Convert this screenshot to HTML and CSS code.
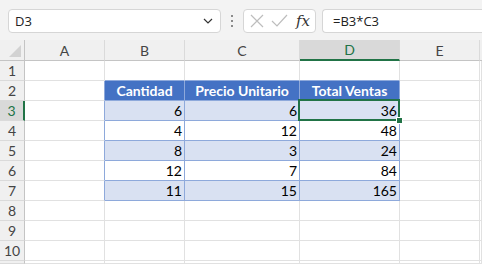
FILE: index.html
```html
<!DOCTYPE html>
<html lang="es">
  <head>
    <meta charset="UTF-8" />
    <title>Hoja de cálculo - Ventas</title>
    <link rel="stylesheet" href="styles.css">
  </head>
  <body>
    <div class="toolbar">
      <div class="name-box">
        <span>D3</span>
        <svg class="chevron" width="10" height="6" viewBox="0 0 10 6">
          <path d="M1 1 L5 5 L9 1" fill="none" stroke="#333" stroke-width="1.2" />
        </svg>
      </div>
      <div class="dots"><i></i><i></i><i></i></div>
      <div class="fx-buttons">
        <svg width="16" height="16" viewBox="0 0 16 16">
          <path d="M2 2 L14 14 M14 2 L2 14" stroke="#bdbdbd" stroke-width="1.2" fill="none" />
        </svg>
        <svg width="17" height="16" viewBox="0 0 17 16">
          <path d="M1 8 L6 13 L16 2" stroke="#bdbdbd" stroke-width="1.2" fill="none" />
        </svg>
        <span class="fx">fx</span>
      </div>
      <div class="formula">=B3*C3</div>
    </div>

    <div class="sheet">
      <div class="hdr corner"><span class="tri"></span></div>
      <div class="hdr col">A</div>
      <div class="hdr col">B</div>
      <div class="hdr col">C</div>
      <div class="hdr col active">D</div>
      <div class="hdr col">E</div>
      <div class="hdr col last"></div>

      <!-- fila 1 -->
      <div class="hdr row">1</div>
      <div class="cell"></div>
      <div class="cell above"></div>
      <div class="cell above"></div>
      <div class="cell above"></div>
      <div class="cell"></div>
      <div class="cell"></div>

      <!-- fila 2 -->
      <div class="hdr row">2</div>
      <div class="cell before"></div>
      <div class="cell th">Cantidad</div>
      <div class="cell th">Precio Unitario</div>
      <div class="cell th">Total Ventas</div>
      <div class="cell"></div>
      <div class="cell"></div>

      <!-- fila 3 -->
      <div class="hdr row active">3</div>
      <div class="cell before"></div>
      <div class="cell td band">6</div>
      <div class="cell td band">6</div>
      <div class="cell td band selected">36<span class="handle"></span></div>
      <div class="cell"></div>
      <div class="cell"></div>

      <!-- fila 4 -->
      <div class="hdr row">4</div>
      <div class="cell before"></div>
      <div class="cell td">4</div>
      <div class="cell td">12</div>
      <div class="cell td">48</div>
      <div class="cell"></div>
      <div class="cell"></div>

      <!-- fila 5 -->
      <div class="hdr row">5</div>
      <div class="cell before"></div>
      <div class="cell td band">8</div>
      <div class="cell td band">3</div>
      <div class="cell td band">24</div>
      <div class="cell"></div>
      <div class="cell"></div>

      <!-- fila 6 -->
      <div class="hdr row">6</div>
      <div class="cell before"></div>
      <div class="cell td">12</div>
      <div class="cell td">7</div>
      <div class="cell td">84</div>
      <div class="cell"></div>
      <div class="cell"></div>

      <!-- fila 7 -->
      <div class="hdr row">7</div>
      <div class="cell before"></div>
      <div class="cell td band">11</div>
      <div class="cell td band">15</div>
      <div class="cell td band">165</div>
      <div class="cell"></div>
      <div class="cell"></div>

      <div class="hdr row">8</div>
      <div class="cell"></div><div class="cell"></div><div class="cell"></div><div class="cell"></div><div class="cell"></div><div class="cell"></div>
      <div class="hdr row">9</div>
      <div class="cell"></div><div class="cell"></div><div class="cell"></div><div class="cell"></div><div class="cell"></div><div class="cell"></div>
      <div class="hdr row">10</div>
      <div class="cell"></div><div class="cell"></div><div class="cell"></div><div class="cell"></div><div class="cell"></div><div class="cell"></div>
      <div class="hdr row"></div>
      <div class="cell"></div><div class="cell"></div><div class="cell"></div><div class="cell"></div><div class="cell"></div><div class="cell"></div>
    </div>
  </body>
</html>
```

FILE: styles.css
```css
* {
  margin: 0;
  padding: 0;
  box-sizing: border-box;
}
body {
  background: #fff;
  color: #000;
  font-family: "Lato", "Liberation Sans", sans-serif;
  width: 482px;
  height: 264px;
  overflow: hidden;
}

/* Barra de fórmulas */
.toolbar {
  height: 40px;
  background: #f3f3f3;
  display: flex;
  align-items: flex-start;
  padding-top: 9px;
  padding-left: 8px;
  font-family: "Open Sans", "Liberation Sans", sans-serif;
  font-size: 13px;
  color: #222;
}
.name-box {
  width: 213px;
  height: 24px;
  background: #fff;
  border: 1px solid #d6d6d6;
  border-radius: 4px;
  display: flex;
  align-items: center;
  justify-content: space-between;
  padding: 0 7px 0 6px;
}
.dots {
  width: 22px;
  height: 24px;
  display: flex;
  flex-direction: column;
  align-items: center;
  justify-content: center;
  gap: 3px;
}
.dots i {
  display: block;
  width: 2px;
  height: 2px;
  background: #8a8a8a;
}
.fx-buttons {
  width: 73px;
  height: 24px;
  background: #fff;
  border: 1px solid #d6d6d6;
  border-radius: 4px;
  display: flex;
  align-items: center;
  padding-left: 5px;
  gap: 6px;
}
.fx {
  font-family: "DejaVu Serif", "Liberation Serif", serif;
  font-style: italic;
  font-size: 15px;
  color: #333;
  margin-left: 2px;
}
.formula {
  flex: 1;
  height: 24px;
  margin-left: 6px;
  background: #fff;
  border: 1px solid #d6d6d6;
  border-right: none;
  border-radius: 4px 0 0 4px;
  padding-left: 10px;
  line-height: 22px;
}

/* Hoja */
.sheet {
  display: grid;
  grid-template-columns: 25px 80px 80px 115px 100px 80px 1fr;
  grid-template-rows: 21px repeat(10, 20px) 3px;
  font-size: 14px;
}
.hdr {
  background: #f0f0f0;
  color: #444;
  display: flex;
  align-items: center;
  justify-content: center;
  font-size: 14px;
}
.hdr.col {
  border-bottom: 1px solid #c4c4c4;
  border-right: 1px solid #dadada;
}
.hdr.col.last {
  border-right: none;
}
.hdr.row {
  border-right: 1px solid #c4c4c4;
  border-bottom: 1px solid #dadada;
}
.hdr.corner {
  border-right: 1px solid #c4c4c4;
  border-bottom: 1px solid #c4c4c4;
  position: relative;
}
.tri {
  position: absolute;
  right: 3px;
  bottom: 3px;
  width: 0;
  height: 0;
  border-left: 12px solid transparent;
  border-bottom: 12px solid #d2d2d2;
}
.hdr.col.active {
  background: #d9d9d9;
  color: #217346;
  border-bottom: 2px solid #217346;
}
.hdr.row.active {
  background: #d9d9d9;
  color: #217346;
  border-right: 2px solid #217346;
}

.cell {
  border-right: 1px solid #e1e1e1;
  border-bottom: 1px solid #e1e1e1;
  display: flex;
  align-items: center;
  white-space: nowrap;
}
.cell.above {
  border-bottom-color: #8ea9db;
}
.cell.before {
  border-right-color: #8ea9db;
}
.cell.th {
  background: #4472c4;
  color: #fff;
  font-weight: bold;
  justify-content: center;
  border-color: #8ea9db;
}
.cell.td {
  justify-content: flex-end;
  padding-right: 2px;
  border-color: #8ea9db;
}
.cell.band {
  background: #d9e1f2;
}
.cell.selected {
  position: relative;
}
.cell.selected::after {
  content: "";
  position: absolute;
  left: -2px;
  top: -2px;
  right: -1px;
  bottom: -1px;
  border: 2px solid #217346;
}
.handle {
  position: absolute;
  right: -4px;
  bottom: -4px;
  width: 7px;
  height: 7px;
  background: #217346;
  border: 1px solid #fff;
  z-index: 2;
}
```
